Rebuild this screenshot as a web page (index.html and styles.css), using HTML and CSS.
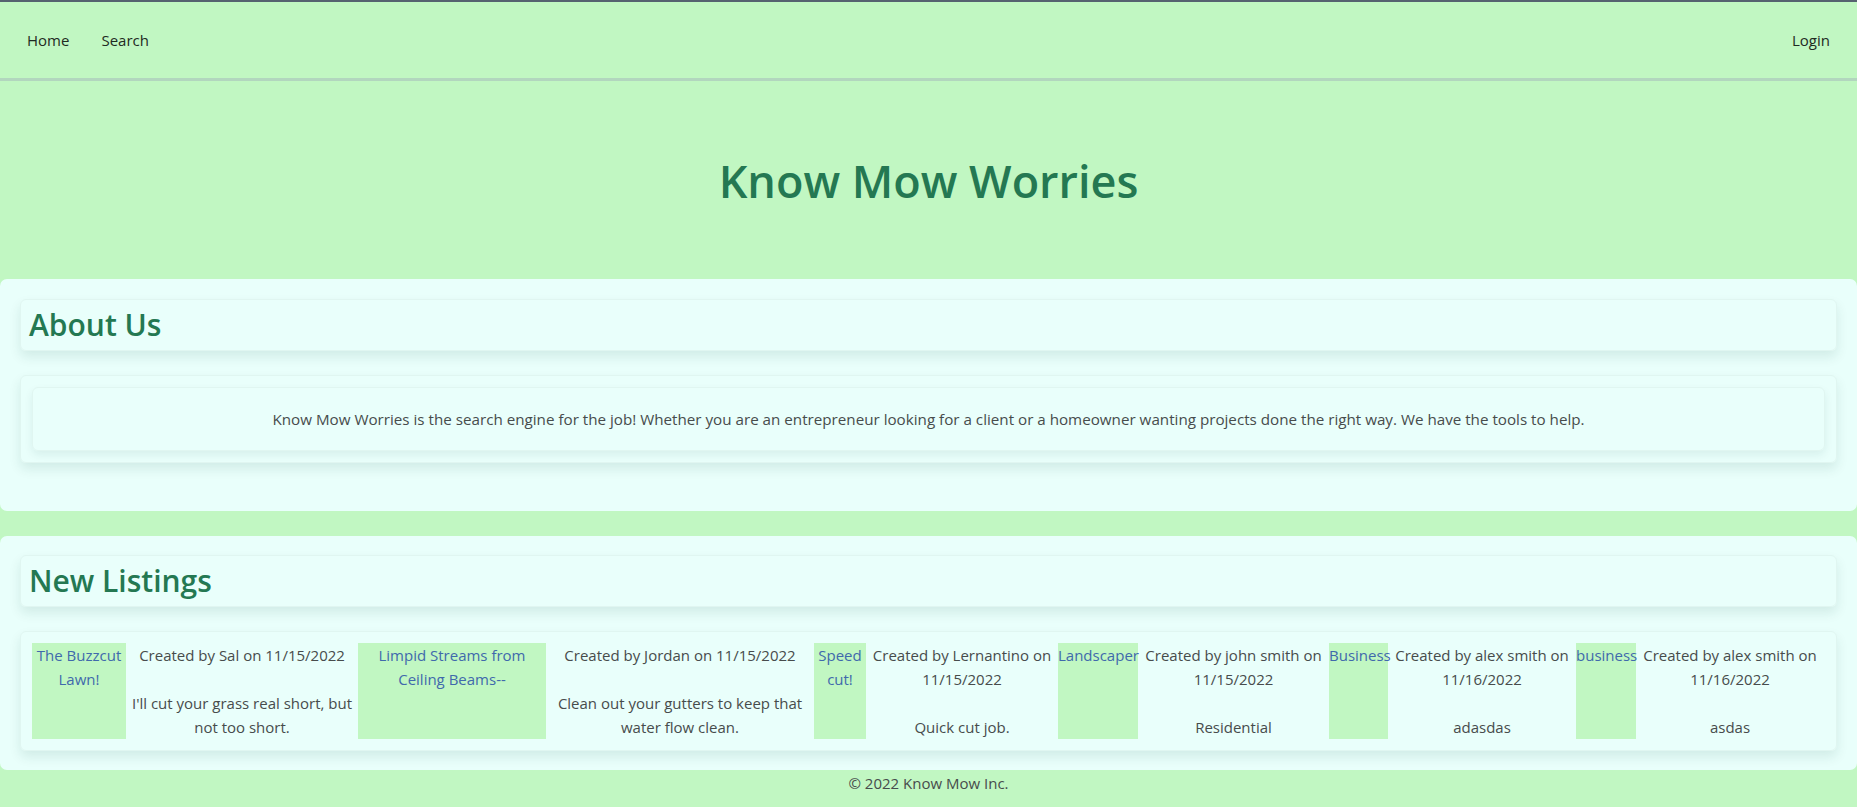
FILE: index.html
```html
<!DOCTYPE html>
<html lang="en">
<head>
<meta charset="utf-8">
<title>Know Mow Worries</title>
<link rel="stylesheet" href="styles.css">
</head>
<body>
<nav class="navbar">
  <div class="nav-left">
    <a class="nav-link" href="#">Home</a>
    <a class="nav-link" href="#">Search</a>
  </div>
  <a class="nav-link" href="#">Login</a>
</nav>
<header class="hero">
  <h1 class="hero-title">Know Mow Worries</h1>
</header>
<main class="content">
  <section class="card card-about">
    <div class="card-head"><h2 class="card-title">About Us</h2></div>
    <div class="panel">
      <div class="panel-inner">
        <p class="about-text">Know Mow Worries is the search engine for the job! Whether you are an entrepreneur looking for a client or a homeowner wanting projects done the right way. We have the tools to help.</p>
      </div>
    </div>
  </section>
  <section class="card card-listings">
    <div class="card-head"><h2 class="card-title">New Listings</h2></div>
    <div class="panel">
      <div class="listing-grid">
        <a class="listing-link" href="#">The Buzzcut Lawn!</a>
        <p class="listing-info">Created by Sal on 11/15/2022<br><br>I'll cut your grass real short, but not too short.</p>
        <a class="listing-link" href="#">Limpid Streams from Ceiling Beams--</a>
        <p class="listing-info">Created by Jordan on 11/15/2022<br><br>Clean out your gutters to keep that water flow clean.</p>
        <a class="listing-link" href="#">Speed cut!</a>
        <p class="listing-info">Created by Lernantino on 11/15/2022<br><br>Quick cut job.</p>
        <a class="listing-link" href="#">Landscaper</a>
        <p class="listing-info">Created by john smith on 11/15/2022<br><br>Residential</p>
        <a class="listing-link" href="#">Business</a>
        <p class="listing-info">Created by alex smith on 11/16/2022<br><br>adasdas</p>
        <a class="listing-link" href="#">business</a>
        <p class="listing-info">Created by alex smith on 11/16/2022<br><br>asdas</p>
      </div>
    </div>
  </section>
</main>
<footer class="footer">© 2022 Know Mow Inc.</footer>
</body>
</html>
```
FILE: styles.css
```css
* { box-sizing: border-box; }

html, body {
  margin: 0;
  padding: 0;
}

body {
  background: #c1f7c2;
  font-family: "Open Sans", "Noto Sans", sans-serif;
  font-size: 15px;
  line-height: 24px;
  color: #474c4c;
}

.navbar {
  display: flex;
  justify-content: space-between;
  align-items: center;
  height: 81px;
  padding: 0 11px;
  border-top: 2px solid #566270;
  border-bottom: 3px solid #b2d6be;
}

.nav-left {
  display: flex;
}

.nav-link {
  display: block;
  padding: 8px 16px;
  color: #1f2a22;
  text-decoration: none;
  font-size: 15px;
}

.hero {
  padding: 71px 0 69px;
  text-align: center;
}

.hero-title {
  margin: 0;
  font-size: 45px;
  line-height: 58px;
  font-weight: 600;
  color: #247852;
}

.content {
  display: flex;
  flex-direction: column;
  gap: 25px;
}

.card {
  background: #e9fffb;
  border-radius: 7px;
  padding: 20px 20px 48px;
  display: flex;
  flex-direction: column;
  gap: 24px;
}

.card-listings {
  padding: 19px 20px 19px;
}

.card-head {
  height: 52px;
  padding: 6px 8px;
  border-radius: 6px;
  border: 1px solid #e0f6f1;
  box-shadow: 0 6px 12px rgba(0, 70, 60, 0.10);
}

.card-title {
  margin: 0;
  font-size: 30px;
  line-height: 38px;
  font-weight: 600;
  color: #247852;
}

.panel {
  padding: 11px;
  border-radius: 6px;
  border: 1px solid #e0f6f1;
  box-shadow: 0 6px 12px rgba(0, 70, 60, 0.10);
}

.panel-inner {
  padding: 19px 16px 19px;
  border-radius: 6px;
  border: 1px solid #e0f6f1;
  box-shadow: 0 4px 8px rgba(0, 70, 60, 0.08);
}

.about-text {
  margin: 0;
  text-align: center;
  font-size: 15.2px;
}

.listing-grid {
  display: grid;
  grid-template-columns: 94px 232px 188px 268px 52px 192px 80px 191px 59px 188px 60px 188px;
}

.listing-link {
  background: #c1f7c2;
  color: #4069ac;
  text-decoration: none;
  text-align: center;
  height: 96px;
}

.listing-info {
  margin: 0;
  text-align: center;
  padding: 0 4px;
}

.footer {
  text-align: center;
  padding-top: 1px;
  height: 37px;
  color: #474c4c;
}
```
